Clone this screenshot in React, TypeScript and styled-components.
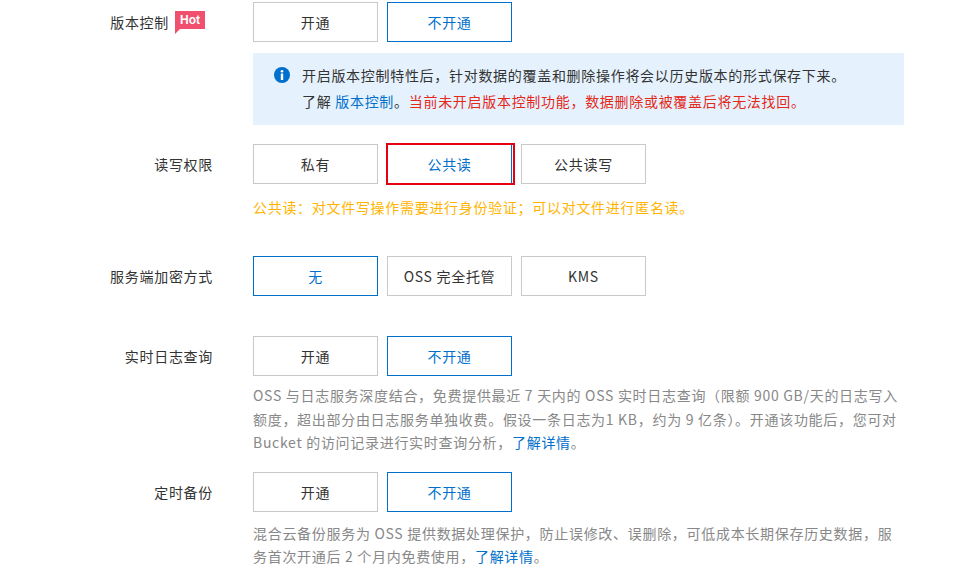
import React from "react";
import styled, { createGlobalStyle } from "styled-components";

const Global = createGlobalStyle`
  body { margin: 0; background: #fff; font-family: "Noto Sans CJK SC", "Noto Sans", sans-serif; font-size: 14px; color: #333; letter-spacing: 0.7px; }
`;

const Page = styled.div`
  padding-top: 2px;
  width: 963px;
`;

const Row = styled.div<{ $mt?: number }>`
  display: grid;
  grid-template-columns: 213px 651px;
  column-gap: 40px;
  margin-top: ${p => p.$mt ?? 0}px;
`;

const Label = styled.div`
  height: 40px;
  display: flex;
  align-items: center;
  justify-content: flex-end;
  color: #333;
  font-size: 14px;
`;

const LabelInner = styled.div`
  display: flex;
  align-items: center;
  gap: 6px;
  margin-right: 8px;
`;

const Hot = styled.span`
  position: relative;
  background: #f04f6e;
  color: #fff;
  font-family: "Liberation Sans", Arial, sans-serif;
  font-weight: bold;
  font-size: 12px;
  letter-spacing: 0;
  line-height: 18px;
  padding: 0 5px;
  margin-top: -4px;
  &::after {
    content: "";
    position: absolute;
    left: 0;
    bottom: -5px;
    border-left: 5px solid #f04f6e;
    border-bottom: 5px solid transparent;
  }
`;

const Content = styled.div``;

const Group = styled.div`
  display: flex;
  gap: 9px;
`;

const Btn = styled.div<{ $active?: boolean; $outlined?: boolean }>`
  position: relative;
  box-sizing: border-box;
  width: 125px;
  height: 40px;
  display: flex;
  align-items: center;
  justify-content: center;
  border: 1px solid ${p => (p.$active ? "#0070cc" : "#c9c9c9")};
  color: ${p => (p.$active ? "#0070cc" : "#333")};
  background: #fff;
  ${p => p.$outlined ? `&::after{content:"";position:absolute;left:-2px;top:-2px;right:-4px;bottom:-2px;border:2px solid #e60012;}` : ""}
`;

const Info = styled.div`
  margin-top: 11px;
  background: #e5f2fd;
  padding: 9px 20px 11px 21px;
  display: flex;
  gap: 12px;
  line-height: 26px;
  color: #333;
`;

const Link = styled.a`
  color: #0070cc;
  text-decoration: none;
`;
const Red = styled.span`color: #e4281a;`;

const Warn = styled.div`
  margin-top: 13px;
  color: #ffb400;
  line-height: 20px;
`;

const Desc = styled.div<{ $mt: number }>`
  margin-top: ${p => p.$mt}px;
  color: #888;
  line-height: 23.5px;
`;

const Icon = () => (
  <svg width="16" height="16" viewBox="0 0 16 16" style={{ marginTop: 5, flex: "none" }}>
    <circle cx="8" cy="8" r="8" fill="#0070cc" />
    <circle cx="8" cy="4.3" r="1.3" fill="#fff" />
    <rect x="6.8" y="6.5" width="2.4" height="6.5" fill="#fff" />
  </svg>
);

export default function App() {
  return (
    <Page>
      <Global />
      <Row>
        <Label><LabelInner>版本控制<Hot>Hot</Hot></LabelInner></Label>
        <Content>
          <Group><Btn>开通</Btn><Btn $active>不开通</Btn></Group>
          <Info>
            <Icon />
            <div>
              开启版本控制特性后，针对数据的覆盖和删除操作将会以历史版本的形式保存下来。<br />
              了解 <Link>版本控制</Link>。<Red>当前未开启版本控制功能，数据删除或被覆盖后将无法找回。</Red>
            </div>
          </Info>
        </Content>
      </Row>
      <Row $mt={19}>
        <Label>读写权限</Label>
        <Content>
          <Group><Btn>私有</Btn><Btn $active $outlined>公共读</Btn><Btn>公共读写</Btn></Group>
          <Warn>公共读：对文件写操作需要进行身份验证；可以对文件进行匿名读。</Warn>
        </Content>
      </Row>
      <Row $mt={39}>
        <Label>服务端加密方式</Label>
        <Content>
          <Group><Btn $active>无</Btn><Btn>OSS 完全托管</Btn><Btn>KMS</Btn></Group>
        </Content>
      </Row>
      <Row $mt={40}>
        <Label>实时日志查询</Label>
        <Content>
          <Group><Btn>开通</Btn><Btn $active>不开通</Btn></Group>
          <Desc $mt={8}>
            OSS 与日志服务深度结合，免费提供最近 7 天内的 OSS 实时日志查询（限额 900 GB/天的日志写入额度，超出部分由日志服务单独收费。假设一条日志为1 KB，约为 9 亿条）。开通该功能后，您可对 Bucket 的访问记录进行实时查询分析，<Link>了解详情</Link>。
          </Desc>
        </Content>
      </Row>
      <Row $mt={17}>
        <Label>定时备份</Label>
        <Content>
          <Group><Btn>开通</Btn><Btn $active>不开通</Btn></Group>
          <Desc $mt={10}>
            混合云备份服务为 OSS 提供数据处理保护，防止误修改、误删除，可低成本长期保存历史数据，服务首次开通后 2 个月内免费使用，<Link>了解详情</Link>。
          </Desc>
        </Content>
      </Row>
    </Page>
  );
}
